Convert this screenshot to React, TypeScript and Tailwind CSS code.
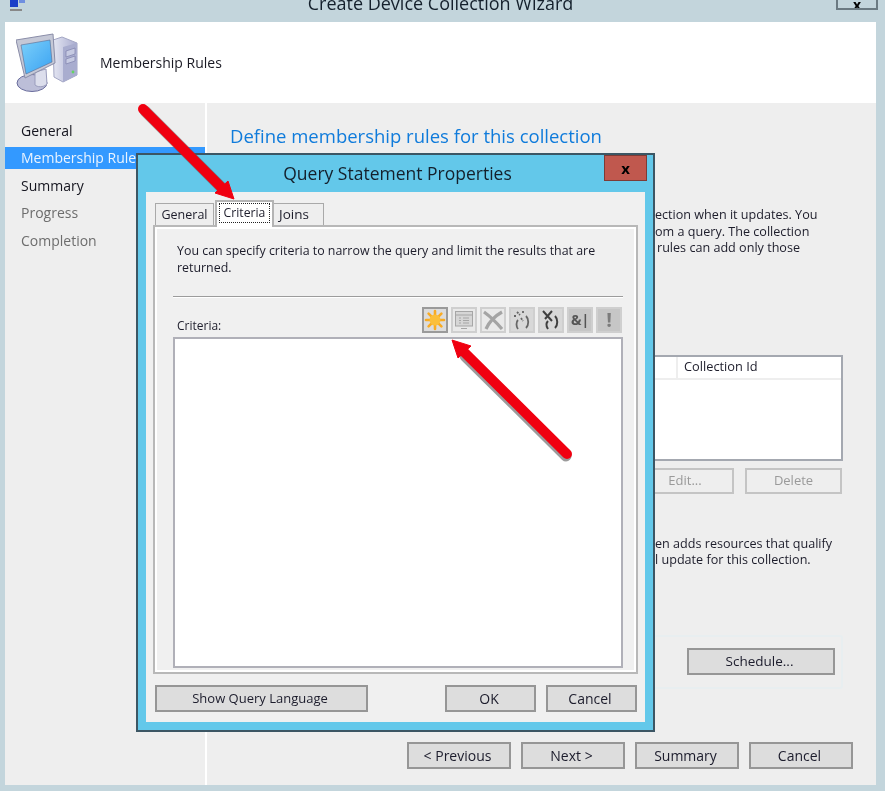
import type { ReactNode } from "react";

const FONT = "font-['Open_Sans','Noto_Sans',sans-serif]";

function WinButton({ children, className = "" }: { children: ReactNode; className?: string }) {
  return (
    <div
      className={`flex items-center justify-center border-2 border-[#969696] bg-[#dddddd] pr-[3px] text-[#1c1c2c] ${className}`}
    >
      {children}
    </div>
  );
}

function NavItem({ label, state }: { label: string; state?: "active" | "off" }) {
  if (state === "active") {
    return (
      <div className="mb-[3px] mt-[2px] flex h-[22px] items-center whitespace-nowrap bg-[#3399ff] pl-4 text-[#eaf4ff]">
        {label}
      </div>
    );
  }
  return (
    <div className={`flex h-[27.5px] items-center pl-4 ${state === "off" ? "text-[#6d6d6d]" : "text-[#15151f]"}`}>
      {label}
    </div>
  );
}

function ComputerIcon() {
  return (
    <svg width="64" height="62" viewBox="0 0 64 62">
      <defs>
        <linearGradient id="scr" x1="0" y1="0" x2="1" y2="1">
          <stop offset="0" stopColor="#7cd0fa" />
          <stop offset="1" stopColor="#3aa2f2" />
        </linearGradient>
        <linearGradient id="case" x1="0" y1="0" x2="1" y2="0">
          <stop offset="0" stopColor="#e4e6f2" />
          <stop offset="1" stopColor="#a9acd0" />
        </linearGradient>
      </defs>
      <path d="M37 8 L46 5 L61 11 L61 43 L47 50 L38 45 Z" fill="url(#case)" stroke="#a3a6c4" />
      <path d="M47 15 L61 11 L61 43 L47 50 Z" fill="#a9adcf" />
      <path d="M50 19 L59 16 L59 22 L50 25 Z M50 27 L59 24 L59 29 L50 32 Z" fill="#c6cae2" stroke="#7f83ad" strokeWidth="0.7" />
      <circle cx="57" cy="40" r="1.4" fill="#63d463" />
      <ellipse cx="16" cy="51" rx="15" ry="8.5" fill="#bcbed8" stroke="#696c9c" />
      <path d="M19 40 L30 37 L31 52 C27 56 21 55 19 53 Z" fill="#dcdeec" stroke="#9a9dbd" />
      <path d="M0 8 L37 2 L39 31 L9 46 Z" fill="#c5c8d6" stroke="#8a8da8" />
      <path d="M5 13 L34 8 L36 30 L10 42 Z" fill="url(#scr)" stroke="#5a6a90" strokeWidth="0.6" />
    </svg>
  );
}

function ToolButton({ children, className = "bg-[#e9e9e9] border-[#cfcfcf]" }: { children: ReactNode; className?: string }) {
  return <div className={`flex h-[26px] w-[26px] items-center justify-center border-2 ${className}`}>{children}</div>;
}

function Arrows() {
  return (
    <svg className="pointer-events-none absolute left-0 top-0 z-30" width="885" height="791" viewBox="0 0 885 791">
      <g fill="#5a5a5a" stroke="#5a5a5a" opacity="0.6">
        <path d="M145 111 L224 190" strokeWidth="11" strokeLinecap="round" />
        <path d="M566 456 L465 356" strokeWidth="11" strokeLinecap="round" />
      </g>
      <g fill="#f00010" stroke="#f00010">
        <path d="M143 109 L224 190" strokeWidth="10" strokeLinecap="round" />
        <path d="M215 193 L228 181 L234 199 Z" strokeWidth="1" />
        <path d="M567 454 L463 351" strokeWidth="10" strokeLinecap="round" />
        <path d="M452 340 L471 346 L458 358 Z" strokeWidth="1" />
      </g>
    </svg>
  );
}

function QueryDialog() {
  return (
    <div className="absolute left-[136px] top-[153px] z-20 flex h-[579px] w-[519px] flex-col border-2 border-[#3c5664] bg-[#63c8ea] px-2 pb-2">
      <div className="relative flex h-[37px] shrink-0 items-center justify-center pl-[4px]">
        <span className="text-[17.5px] text-[#14202c]">Query Statement Properties</span>
        <div className="absolute right-[-2px] top-0 flex h-[26px] w-[43px] items-center justify-center border border-[#7d3b36] bg-[#c0584e] text-[15px] font-bold leading-none text-black">
          x
        </div>
      </div>

      <div className="flex flex-1 flex-col bg-[#f0f0f0] px-[7px] pt-[8px] text-[#1d1d2b]">
        {/* tabs */}
        <div className="relative z-10 flex h-[25px] shrink-0 items-end pl-[2px] text-[12.5px]">
          <div className="flex h-[22px] w-[59px] items-center justify-center border border-b-0 border-[#a9a9a9] bg-[#eeeeee] pt-[1px]">
            General
          </div>
          <div className="-mb-[2px] ml-[1px] flex h-[27px] w-[59px] justify-center border-2 border-b-0 border-[#b4b4b4] bg-white pt-[1px]">
            <span className="h-[20px] border border-dotted border-[#222] px-[4px] text-[12.2px] leading-[17px]">Criteria</span>
          </div>
          <div className="flex h-[22px] w-[50px] items-center border border-b-0 border-l-0 border-[#a9a9a9] bg-[#eeeeee] pl-[5px] text-[13.5px]">
            Joins
          </div>
        </div>

        {/* panel */}
        <div className="flex h-[449px] shrink-0 flex-col border-2 border-[#b8b8b8] bg-[#f0f0f0] pl-[18px] pr-[13px] pt-[15px] text-[12.4px] shadow-[inset_0_0_0_2px_#ffffff]">
          <p className="whitespace-nowrap pl-[4px] leading-[17px]">
            You can specify criteria to narrow the query and limit the results that are
            <br />
            returned.
          </p>
          <div className="mt-[20px] h-[2px] shrink-0 border-t border-[#9c9c9c] bg-white" />
          <div className="mt-[8px] flex h-[28px] shrink-0 items-center">
            <span className="pl-[4px] pt-[12px] text-[12px]">Criteria:</span>
            <div className="ml-auto mr-[1px] flex gap-[3px]">
              <ToolButton className="border-[#9a9a9a] bg-[#dcdcdc]">
                <svg width="22" height="22" viewBox="0 0 22 22" stroke="#f9ab22" strokeWidth="2.6" strokeLinecap="round">
                  <path d="M11 2 V20 M2 11 H20 M4.6 4.6 L17.4 17.4 M17.4 4.6 L4.6 17.4" />
                  <circle cx="11" cy="11" r="5.5" fill="#fbbf3a" stroke="none" />
                </svg>
              </ToolButton>
              <ToolButton>
                <svg width="20" height="20" viewBox="0 0 20 20" fill="#d6d6d6" stroke="#a6a6a6">
                  <rect x="1.5" y="1.5" width="17" height="14.5" />
                  <path d="M1.5 5 H18.5 M5 8 H7 M9 8 H15 M5 10.5 H7 M9 10.5 H15 M5 13 H7 M9 13 H15 M7 18.5 H13" />
                </svg>
              </ToolButton>
              <ToolButton>
                <svg width="22" height="20" viewBox="0 0 22 20" fill="none" stroke="#a4a4a4" strokeWidth="3.2">
                  <path d="M2 2 C9 7 14 12 20 19 M20 2 C13 6 7 12 4 19" />
                </svg>
              </ToolButton>
              <ToolButton className="border-[#cfcfcf] bg-[#d8d8d8]">
                <svg width="20" height="20" viewBox="0 0 20 20" fill="none" stroke="#666" strokeWidth="1.8">
                  <path d="M6 10 C4 12 4 16 6 19 M14 6 C17 9 17 15 14 18" />
                  <path d="M5 2 L8 5 M11 1 V4 M2 6 H5 M9 8 L11 11" strokeDasharray="2 1" />
                </svg>
              </ToolButton>
              <ToolButton className="border-[#cfcfcf] bg-[#d8d8d8]">
                <svg width="20" height="20" viewBox="0 0 20 20" fill="none" stroke="#3f3f3f" strokeWidth="2">
                  <path d="M7 11 C5 13 5 16 7 19 M14 6 C17 9 17 15 14 18" />
                  <path d="M2 1 L11 11 M11 1 L4 9" />
                </svg>
              </ToolButton>
              <ToolButton className="border-[#cfcfcf] bg-[#c6c6c6]">
                <span className="text-[14px] font-bold leading-none text-[#555]">&amp;|</span>
              </ToolButton>
              <ToolButton className="border-[#cfcfcf] bg-[#c6c6c6]">
                <span className="text-[20px] font-bold leading-none text-[#7c7c7c]">!</span>
              </ToolButton>
            </div>
          </div>
          <div className="mt-[3px] h-[331px] shrink-0 border-2 border-[#b0b0b8] bg-white" />
        </div>

        <div className="mt-[11px] flex gap-[10px] pl-[2px] pr-[1px] text-[14px]">
          <WinButton className="h-[27px] w-[213px] text-[13px]">Show Query Language</WinButton>
          <WinButton className="ml-auto h-[27px] w-[91px] border-[#4f8fc4]">OK</WinButton>
          <WinButton className="h-[27px] w-[91px]">Cancel</WinButton>
        </div>
      </div>
    </div>
  );
}

export default function App() {
  return (
    <div className={`relative h-[791px] w-[885px] overflow-hidden bg-[#c3d5dc] blur-[0.5px] ${FONT}`}>
      {/* title bar, cut off by the top of the shot */}
      <div className="flex h-[22px] items-start overflow-hidden">
        <svg className="ml-[9px] shrink-0" width="18" height="12" viewBox="0 0 18 12">
          <rect x="1" y="-2" width="8" height="9" fill="#1c3fc8" />
          <rect x="10" y="-3" width="6" height="6" fill="#6f8fe0" />
          <path d="M1 10 H13" stroke="#888" strokeWidth="2" />
        </svg>
        <div className="-mt-[9px] flex-1 pl-[18px] text-center text-[18px] leading-[24px] text-[#14202c]">
          Create Device Collection Wizard
        </div>
        <div className="mr-[7px] flex h-[10px] w-[42px] shrink-0 items-end justify-center overflow-hidden border-2 border-t-0 border-[#6b7a82] text-[14px] font-bold leading-[6px] text-black">
          x
        </div>
      </div>

      {/* wizard client area */}
      <div className="ml-[5px] flex h-[763px] w-[871px] flex-col bg-[#eeeeee] text-[14px]">
        <div className="flex h-[81px] shrink-0 items-center bg-white pl-[11px] text-[#1a1a24]">
          <ComputerIcon />
          <span className="ml-[20px]">Membership Rules</span>
        </div>

        <div className="flex flex-1">
          <nav className="w-[200px] shrink-0 pt-[14px]">
            <NavItem label="General" />
            <NavItem label="Membership Rules" state="active" />
            <NavItem label="Summary" />
            <NavItem label="Progress" state="off" />
            <NavItem label="Completion" state="off" />
          </nav>
          <div className="w-[2px] shrink-0 bg-white" />

          <div className="flex flex-1 flex-col">
            <h1 className="pl-[23px] pt-[21px] text-[18.5px] font-normal leading-[24px] text-[#0f7bdb]">
              Define membership rules for this collection
            </h1>

            <div className="ml-[433px] w-[203px] text-[12.6px] text-[#1d1d2b]">
              <div className="mt-[59px] whitespace-nowrap pl-[15px] leading-[16.5px]">
                <p>ection when it updates. You</p>
                <p>om a query. The collection</p>
                <p className="pl-[2px]">rules can add only those</p>
              </div>

              <div className="mt-[98px] h-[106px] border-2 border-[#a4a8b0] bg-white">
                <div className="flex h-[23px] items-center border-b-2 border-[#eeeeee] text-[12.8px]">
                  <div className="h-full w-[36px] border-r-2 border-[#eeeeee]" />
                  <span className="pl-[6px]">Collection Id</span>
                </div>
              </div>

              <div className="mt-[7px] flex gap-[11px] pr-[1px] text-[13px] text-[#9a9a9a]">
                <div className="flex h-[26px] w-[94px] items-center justify-center border-2 border-[#c4c4c4] pr-[4px]">
                  Edit...
                </div>
                <div className="flex h-[26px] flex-1 items-center justify-center border-2 border-[#c4c4c4]">
                  Delete
                </div>
              </div>

              <div className="mt-[42px] whitespace-nowrap pl-[15px] leading-[16.5px]">
                <p>en adds resources that qualify</p>
                <p>l update for this collection.</p>
              </div>

              <div className="mt-[66px] flex h-[54px] items-center justify-end rounded-[3px] border-2 border-[#e8eef0] pr-[6px]">
                <WinButton className="h-[27px] w-[148px] text-[13.5px]">Schedule...</WinButton>
              </div>
            </div>

            <div className="mt-auto flex justify-end gap-[10px] pb-[16px] pr-[23px]">
              <WinButton className="h-[27px] w-[104px]">&lt; Previous</WinButton>
              <WinButton className="h-[27px] w-[104px]">Next &gt;</WinButton>
              <WinButton className="h-[27px] w-[104px]">Summary</WinButton>
              <WinButton className="h-[27px] w-[104px]">Cancel</WinButton>
            </div>
          </div>
        </div>
      </div>

      <QueryDialog />
      <Arrows />
    </div>
  );
}
